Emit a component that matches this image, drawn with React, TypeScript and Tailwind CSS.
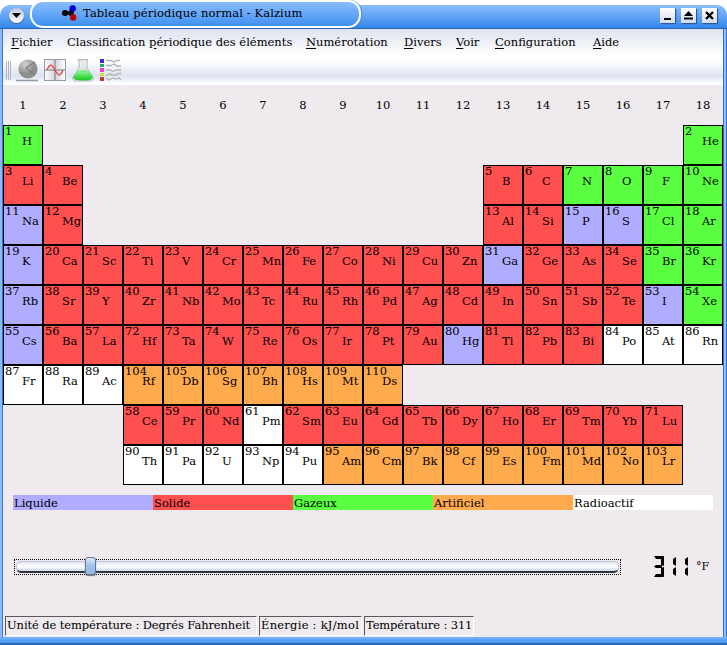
import React from "react";

type Kind = "l" | "s" | "g" | "a" | "r";

const fills: Record<Kind, string> = {
  l: "bg-[#b0acff]",
  s: "bg-[#ff5050]",
  g: "bg-[#5aff41]",
  a: "bg-[#ffaa4c]",
  r: "bg-white",
};

// Each row: starting column, then "number symbol kind" entries; "_n" skips n columns.
const rows: string[] = [
  "1Hg _16 2Heg",
  "3Lis 4Bes _10 5Bs 6Cs 7Ng 8Og 9Fg 10Neg",
  "11Nal 12Mgs _10 13Als 14Sis 15Pl 16Sl 17Clg 18Arg",
  "19Kl 20Cas 21Scs 22Tis 23Vs 24Crs 25Mns 26Fes 27Cos 28Nis 29Cus 30Zns 31Gal 32Ges 33Ass 34Ses 35Brg 36Krg",
  "37Rbl 38Srs 39Ys 40Zrs 41Nbs 42Mos 43Tcs 44Rus 45Rhs 46Pds 47Ags 48Cds 49Ins 50Sns 51Sbs 52Tes 53Il 54Xeg",
  "55Csl 56Bas 57Las 72Hfs 73Tas 74Ws 75Res 76Oss 77Irs 78Pts 79Aus 80Hgl 81Tls 82Pbs 83Bis 84Por 85Atr 86Rnr",
  "87Frr 88Rar 89Acr 104Rfa 105Dba 106Sga 107Bha 108Hsa 109Mta 110Dsa",
  "_3 58Ces 59Prs 60Nds 61Pmr 62Sms 63Eus 64Gds 65Tbs 66Dys 67Hos 68Ers 69Tms 70Ybs 71Lus",
  "_3 90Thr 91Par 92Ur 93Npr 94Pur 95Ama 96Cma 97Bka 98Cfa 99Esa 100Fma 101Mda 102Noa 103Lra",
];

function Row({ data }: { data: string }) {
  return (
    <div className="flex h-10">
      {data.split(" ").map((item) => {
        if (item[0] === "_") {
          return <div key={item} className="shrink-0" style={{ width: Number(item.slice(1)) * 40 }} />;
        }
        const m = item.match(/^(\d+)(\w+)(\w)$/)!;
        return (
          <div key={item} className={`h-10 w-10 shrink-0 border border-black whitespace-nowrap ${fills[m[3] as Kind]}`}>
            <div className="h-[10px] pl-px text-[11.5px] leading-[10px]">{m[1]}</div>
            <div className="h-[10px] pl-[18px] text-[11.5px] leading-[10px]">{m[2]}</div>
          </div>
        );
      })}
    </div>
  );
}

const menus: [string, string, string][] = [
  ["F", "ichier", "w-[56px]"],
  ["", "Classification périodique des éléments", "w-[239px]"],
  ["N", "umérotation", "w-[98px]"],
  ["D", "ivers", "w-[52px]"],
  ["V", "oir", "w-[39px]"],
  ["C", "onfiguration", "w-[98px]"],
  ["A", "ide", "w-[40px]"],
];

const legend: [string, Kind][] = [
  ["Liquide", "l"],
  ["Solide", "s"],
  ["Gazeux", "g"],
  ["Artificiel", "a"],
  ["Radioactif", "r"],
];

function WindowButton({ children }: { children: React.ReactNode }) {
  return (
    <div className="flex h-[15px] w-[15px] items-center justify-center bg-linear-to-b from-white to-[#d4dceb] shadow-[1px_1px_1px_#245aa0]">
      <svg width="11" height="11" viewBox="0 0 11 11">{children}</svg>
    </div>
  );
}

function Titlebar() {
  return (
    <div className="flex h-[29px] items-start bg-linear-to-b from-white from-[5px] to-white to-[5px]">
      <div className="relative mt-[5px] flex h-6 w-full rounded-t-[10px] border-b border-[#2866b4] bg-linear-to-b from-[#8abdfc] to-[#3187ea]">
        <div className="mt-[3px] ml-[9px] flex h-[15px] w-[15px] items-center justify-center rounded-full bg-linear-to-b from-[#bdc8da] to-white shadow-[0_1px_1px_#315b92]">
          <svg width="9" height="5"><path d="M0 0H9L4.5 5Z" fill="#000" /></svg>
        </div>
        <div className="-mt-[5px] ml-[6px] flex h-[28px] w-[331px] items-start rounded-[13px] border-2 border-t-[#fff] border-white bg-linear-to-b from-[#8abdfc] to-[#3d90f2] shadow-[1px_0_1px_#4f88cb]">
          <svg className="mt-[3px] ml-[29px]" width="17" height="17">
            <path d="M4 8H9M6 8L12 4V12Z" fill="#111" stroke="#111" strokeWidth="1.5" />
            <circle cx="4" cy="8" r="3" />
            <circle cx="11.7" cy="3.5" r="3.2" fill="#0000c8" />
            <circle cx="12.2" cy="12.5" r="3.2" fill="#c00000" />
          </svg>
          <span className="mt-[3px] ml-[5px] text-[11.5px] leading-4 tracking-[0.11px] whitespace-nowrap">Tableau périodique normal - Kalzium</span>
        </div>
        <div className="mt-[3px] ml-auto flex gap-[6px] pr-[10px]">
          <WindowButton><path d="M2 8H9V10H2Z" /></WindowButton>
          <WindowButton><path d="M1 6L5.5 1L10 6ZM1 7.5H10V9.5H1Z" /></WindowButton>
          <WindowButton><path d="M2 2L9 9M9 2L2 9" stroke="#000" strokeWidth="2.4" /></WindowButton>
        </div>
      </div>
    </div>
  );
}

function Toolbar() {
  return (
    <div className="flex h-[30px] items-center pl-[3px]">
      <svg width="5" height="19" className="mr-[4px]">
        <path d="M.5 0V19M2.5 0V19M4.5 0V19" stroke="#b2b5c0" />
      </svg>
      <svg width="24" height="24" viewBox="0 0 24 24" className="mr-[4px]">
        <defs>
          <radialGradient id="ball" cx=".35" cy=".25"><stop stopColor="#d2d2d2" /><stop offset="1" stopColor="#8e8e8e" /></radialGradient>
          <linearGradient id="flask" x2="0" y2="1"><stop stopColor="#90f59a" /><stop offset="1" stopColor="#16c51c" /></linearGradient>
        </defs>
        <path d="M1 22.5H23" stroke="#989ca6" strokeWidth="1.5" />
        <circle cx="13" cy="11" r="9.6" fill="url(#ball)" />
        <path d="M20 4L11 10L20 17" fill="none" stroke="#737373" strokeWidth="1" />
      </svg>
      <svg width="24" height="24" viewBox="0 0 24 24" className="mr-[4px]">
        <defs><linearGradient id="graph"><stop stopColor="#fff" /><stop offset=".5" stopColor="#d2d2e0" /><stop offset="1" stopColor="#fff" /></linearGradient></defs>
        <rect x="1.5" y="1.5" width="21" height="21" fill="url(#graph)" stroke="#9a9aa5" />
        <path d="M12 2V22M2 12H22" stroke="#777" />
        <path d="M4 12C7 5 9 6 12 12S17 19 20 12" fill="none" stroke="#ee3535" strokeWidth="1.2" />
      </svg>
      <svg width="24" height="24" viewBox="0 0 24 24" className="mr-[4px]">
        <path d="M7 1.5H17L16 4V10L22 19Q23 23 19 23H5Q1 23 2 19L8 10V4Z" fill="#dfe5e5" stroke="#b4bcbc" />
        <path d="M6 13Q12 16 18 13L22 19Q22 22.5 12 22.5T2 19Z" fill="url(#flask)" />
        <ellipse cx="12" cy="14" rx="6" ry="2" fill="#78ed86" />
        <path d="M10 4V9M14 3V8" stroke="#fff" />
      </svg>
      <svg width="24" height="24" viewBox="0 0 24 24">
        <path d="M1 1H5V5H1Z" fill="#332cdc" />
        <path d="M1 6H5V9H1Z" fill="#23aa65" />
        <path d="M1 10H5V14H1Z" fill="#ea3be5" />
        <path d="M1 15H5V18H1Z" fill="#d9d636" />
        <path d="M1 19H5V23H1Z" fill="#bc3d32" />
        <path d="M7 2.5H12L15 4L18 2.5H21M7 7.5H12L15 6L18 8H22M7 12H11L14 13.5L17 12H22M7 17.5L10 16L14 17H17L19 15.5H22M7 20L10 22L14 20L17 21L20 20L22 22" fill="none" stroke="#b2b2b8" strokeWidth="1.3" />
      </svg>
    </div>
  );
}

function Slider() {
  return (
    <div className="relative h-4 w-[607px] border border-dotted border-black">
      <div className="mt-px ml-px h-[12px] w-[603px] rounded-[5px] border border-[#c2c4d8] border-b-2 border-b-[#34363e] bg-linear-to-b from-[#dfe2f2] via-white to-[#ced5e8]" />
      <div className="absolute top-[-3px] left-[70px] h-[18px] w-[11px] rounded-[3px] border border-[#6a7891] bg-linear-to-b from-[#d9ebff] via-[#9ec2ee] to-[#93b8e6] shadow-[0_1px_1px_#6b6f78]" />
    </div>
  );
}

function Lcd() {
  return (
    <svg width="36" height="22" viewBox="0 0 36 22" role="img" aria-label="311">
      <g fill="#000">
        <path d="M0 0H10L8 3H2ZM0 10.5L2 9H8V12H2ZM0 21L2 18H8L10 21Z" />
        <path d="M10 0V10L7 9V3ZM10 11V21L7 18V12Z" />
        <path d="M19 3L22 1V10L19 8ZM19 13L22 11V20L19 18Z" />
        <path d="M31 3L34 1V10L31 8ZM31 13L34 11V20L31 18Z" />
      </g>
    </svg>
  );
}

function Status({ text, width }: { text: string; width: string }) {
  return (
    <div className={`h-5 border border-t-[#5b575b] border-r-white border-b-white border-l-[#5b575b] pl-px text-[11.5px] leading-[17px] whitespace-nowrap ${width}`}>
      {text}
    </div>
  );
}

export default function App() {
  return (
    <div className="flex h-[645px] w-[727px] flex-col overflow-hidden bg-white font-['DejaVu_Serif',serif] text-black">
      <Titlebar />
      <div className="flex h-[608px]">
        <div className="w-[3px] shrink-0 border-r border-[#337bd0] bg-[#8abafa]" />
        <div className="flex w-[720px] shrink-0 flex-col bg-[#eeeaee]">
          <div className="h-[56px] bg-[linear-gradient(#dfe3f0_0px,#ffffff_27px,#ffffff_32px,#dde3ef_47px,#fcfcff_54px,#ffffff_56px)]">
            <div className="flex h-[26px] items-center pt-px pl-2 text-[11.5px] whitespace-nowrap">
              {menus.map(([key, rest, width]) => (
                <div key={rest} className={`shrink-0 ${width}`}>
                  {key ? (
                    <><span className="underline underline-offset-2">{key}</span>{rest}</>
                  ) : (
                    <>Classification <span className="underline underline-offset-2">p</span>ériodique des éléments</>
                  )}
                </div>
              ))}
            </div>
            <Toolbar />
          </div>
          <div className="grid h-10 grid-cols-18 items-center pt-px text-center text-[11.5px]">
            {Array.from({ length: 18 }, (_, i) => <div key={i}>{i + 1}</div>)}
          </div>
          {rows.map((r) => <Row key={r} data={r} />)}
          <div className="mt-[10px] ml-[10px] flex">
            {legend.map(([name, kind]) => (
              <div key={name} className={`h-[15px] w-[140px] pl-px text-[11.5px] leading-[17px] ${fills[kind]}`}>{name}</div>
            ))}
          </div>
          <div className="mt-[46px] ml-[11px] flex h-[22px] items-center">
            <Slider />
            <div className="ml-[33px]"><Lcd /></div>
            <span className="ml-[6px] text-[11px]">°F</span>
          </div>
          <div className="mt-auto mb-px ml-[2px] flex gap-[2px]">
            <Status text="Unité de température : Degrés Fahrenheit" width="w-[252px] tracking-[-0.1px]" />
            <Status text="Énergie : kJ/mol" width="w-[103px] tracking-[0.25px]" />
            <Status text="Température : 311" width="w-[110px] tracking-[-0.13px]" />
          </div>
        </div>
        <div className="w-[4px] shrink-0 border-x border-[#2c73c8] bg-[#91bffc]" />
      </div>
      <div className="h-[8px] border-b-2 border-[#2769b7] bg-linear-to-b from-[#76b3fc] to-[#4592ef]" />
    </div>
  );
}
